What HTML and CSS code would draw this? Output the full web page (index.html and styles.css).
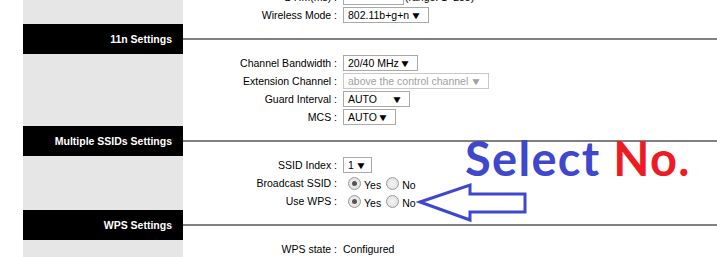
FILE: index.html
```html
<!DOCTYPE html>
<html lang="en">
<head>
  <meta charset="UTF-8" />
  <title>Wireless Settings</title>
  <link rel="stylesheet" href="styles.css">
</head>
<body>
  <div class="page">

    <div class="block first">
      <div class="side"></div>
      <div class="content">
        <div class="row">
          <span class="label">DTIM(ms) :</span>
          <span class="field"><span class="text-input"></span><span class="hint">(range: 1~255)</span></span>
        </div>
        <div class="row">
          <span class="label">Wireless Mode :</span>
          <span class="field"><span class="select w-mode">802.11b+g+n<i>▼</i></span></span>
        </div>
      </div>
    </div>

    <div class="head">
      <div class="side">11n Settings</div>
      <div class="rule"></div>
    </div>

    <div class="block">
      <div class="side"></div>
      <div class="content">
        <div class="row">
          <span class="label">Channel Bandwidth :</span>
          <span class="field"><span class="select w-bw">20/40 MHz<i>▼</i></span></span>
        </div>
        <div class="row">
          <span class="label">Extension Channel :</span>
          <span class="field"><span class="select w-ext disabled">above the control channel<i>▼</i></span></span>
        </div>
        <div class="row">
          <span class="label">Guard Interval :</span>
          <span class="field"><span class="select w-gi">AUTO<i>▼</i></span></span>
        </div>
        <div class="row">
          <span class="label">MCS :</span>
          <span class="field"><span class="select w-mcs">AUTO<i>▼</i></span></span>
        </div>
      </div>
    </div>

    <div class="head">
      <div class="side">Multiple SSIDs Settings</div>
      <div class="rule"></div>
    </div>

    <div class="block">
      <div class="side"></div>
      <div class="content">
        <div class="row">
          <span class="label">SSID Index :</span>
          <span class="field"><span class="select w-ssid">1<i>▼</i></span></span>
        </div>
        <div class="row">
          <span class="label">Broadcast SSID :</span>
          <span class="field">
            <span class="radio checked"></span><span class="opt">Yes</span>
            <span class="radio"></span><span class="opt">No</span>
          </span>
        </div>
        <div class="row">
          <span class="label">Use WPS :</span>
          <span class="field">
            <span class="radio checked"></span><span class="opt">Yes</span>
            <span class="radio"></span><span class="opt">No</span>
          </span>
        </div>
      </div>
    </div>

    <div class="head">
      <div class="side">WPS Settings</div>
      <div class="rule"></div>
    </div>

    <div class="block">
      <div class="side"></div>
      <div class="content">
        <div class="row">
          <span class="label">WPS state :</span>
          <span class="field">Configured</span>
        </div>
      </div>
    </div>

  </div>

  <!-- annotation drawn over the screenshot -->
  <div class="note"><span class="blue">Select</span> <span class="red">No.</span></div>
  <svg class="arrow" width="717" height="257" viewBox="0 0 717 257">
    <polygon points="420,202 470,185 470,194 525,194 525,212 470,212 470,220"
             fill="none" stroke="#3f48cc" stroke-width="3" stroke-linejoin="miter"/>
  </svg>
</body>
</html>
```

FILE: styles.css
```css
body {
  margin: 0;
  background-color: #ffffff;
  font-family: "Liberation Sans", Arial, sans-serif;
  font-size: 10.5px;
  color: #000000;
  overflow: hidden;
}

.page {
  display: flex;
  flex-direction: column;
  padding-left: 23px;
}

.block {
  display: flex;
}

.block.first {
  margin-top: -12px;
}

.side {
  width: 160px;
  flex-shrink: 0;
  background-color: #e6e6e6;
}

.content {
  flex: 1;
}

.row {
  display: flex;
  align-items: center;
  height: 18px;
}

.label {
  width: 154px;
  text-align: right;
  white-space: nowrap;
}

.field {
  display: flex;
  align-items: center;
  margin-left: 6px;
  white-space: nowrap;
}

.head {
  display: flex;
  align-items: center;
  height: 30px;
}

.head .side {
  background-color: #000000;
  color: #ffffff;
  font-weight: bold;
  text-align: right;
  padding-right: 11px;
  box-sizing: border-box;
  line-height: 30px;
  height: 30px;
}

.rule {
  flex: 1;
  height: 2px;
  background-color: #808080;
}

.text-input {
  width: 59px;
  height: 14px;
  border: 1px solid #a9a9a9;
}

.hint {
  margin-left: 1px;
}

.select {
  display: flex;
  align-items: center;
  justify-content: space-between;
  box-sizing: border-box;
  height: 16px;
  padding: 0 7px 0 4px;
  border: 1px solid #a9a9a9;
  color: #000000;
}

.w-ssid {
  padding-right: 5px;
}

.select i {
  font-style: normal;
  font-size: 10px;
  transform: scaleX(1.2);
}

.select.disabled {
  color: #a0a0a0;
  border-color: #c8c8c8;
}

.w-mode { width: 86px; }
.w-bw { width: 75px; }
.w-ext { width: 146px; }
.w-gi { width: 67px; }
.w-mcs { width: 53px; }
.w-ssid { width: 29px; }

.radio {
  width: 11px;
  height: 11px;
  border: 1px solid #9a9a9a;
  border-radius: 50%;
  background: radial-gradient(circle, #f4f4f4 0%, #dcdcdc 100%);
  margin: 0 3px 0 5px;
  position: relative;
}

.radio.checked::after {
  content: "";
  position: absolute;
  left: 3px;
  top: 3px;
  width: 5px;
  height: 5px;
  border-radius: 50%;
  background-color: #555555;
}

.opt {
  margin-top: 3px;
}

.note {
  position: absolute;
  left: 465px;
  top: 135px;
  font-family: Lato, "Open Sans", sans-serif;
  font-weight: bold;
  font-size: 47px;
  letter-spacing: 1.3px;
  line-height: 1;
  white-space: nowrap;
}

.blue { color: #3f48cc; }
.red { color: #ed1c24; }

.arrow {
  position: absolute;
  left: 0;
  top: 0;
}
```
